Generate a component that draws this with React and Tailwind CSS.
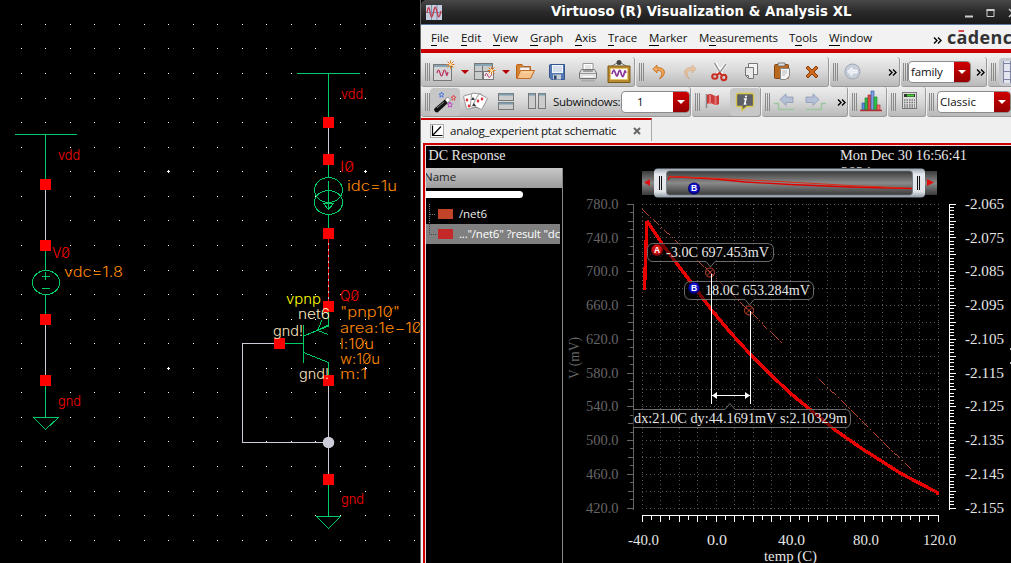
import React from "react";

const GREEN = "#00cc66";
const WIRE = "#ccccd8";
const RED = "#ff0000";

/* ---------- schematic canvas ---------- */

function Label({ x, y, w, size = 14, fill, children }) {
  return (
    <text
      x={x}
      y={y}
      fill={fill}
      textLength={w}
      lengthAdjust="spacingAndGlyphs"
      fontSize={size}
      className="font-['Inter','DejaVu_Sans',sans-serif] font-light"
    >
      {children}
    </text>
  );
}

function Pin({ x, y }) {
  return <rect x={x - 5} y={y - 5} width="11" height="11" fill={RED} />;
}

function Schematic() {
  const dots = [];
  for (let r = 0; r < 23; r++) {
    for (let c = 0; c < 17; c++) {
      const x = Math.floor(21.2 + 24.56 * c);
      const y = Math.floor(24.4 + 24.56 * r);
      dots.push(<rect key={r + "-" + c} x={x} y={y} width="1" height="1" fill="#fff" />);
    }
  }
  const crosses = [[168, 171], [365, 171], [168, 368], [365, 368]];
  return (
    <svg width="420" height="563" viewBox="0 0 420 563" className="block shrink-0 bg-black">
      <g shapeRendering="crispEdges">
        {dots}
        {crosses.map(([x, y]) => (
          <path key={x + "," + y} d={`M${x - 1} ${y + 0.5}h3M${x + 0.5} ${y - 1}v3`} stroke="#fff" />
        ))}
        <g fill="none" stroke={GREEN}>
          <path d="M15 134.5H77M45.5 134V180M45.5 250V270M45.5 295V315M45.5 385V417M33 417.5H59" />
          <path d="M45.5 272V280M42 276.5H50M42 288.5H50" />
          <path d="M33.5 417.5L45.5 429.5L58.5 417.5" />
          <ellipse cx="46" cy="282.500" rx="13.500" ry="12" />
          <path d="M297 73.500H360M328.500 73V118M328.500 164V177M328.500 215V229" />
          <ellipse cx="328.500" cy="190" rx="14" ry="12.500" />
          <ellipse cx="328.500" cy="202.500" rx="14" ry="12" />
          <path d="M328.500 181V209M323 203.500H334M323.500 203.500L328.500 209.500L333.500 203.500" />
          <path d="M328.500 310V326L303.500 336M303.500 325V363M303.500 352.500L328.500 362.500V376M284 343.500H303" />
          <path d="M322 320L317.500 330.500L328.500 334.500M317.500 330.500L328.500 325" />
          <path d="M328.500 484V516M316 516.500H341M316.500 516.500L328.500 528.500L340.500 516.500" />
        </g>
        <g fill="none" stroke={WIRE}>
          <path d="M45.5 190V240M45.5 325V375M328.500 128V154M275 343.500H242.500V442.500H328M328.500 386V475M328.500 239V302" />
          <path d="M328.500 239V302" stroke={RED} strokeDasharray="4 2" />
        </g>
        {[[45, 184], [45, 245], [45, 319], [45, 380], [328, 122], [328, 159], [328, 233], [328, 306], [279, 343], [328, 380], [328, 479]].map(
          ([x, y]) => (
            <Pin key={x + "," + y} x={x} y={y} />
          )
        )}
      </g>
      <circle cx="328.500" cy="442.500" r="5.800" fill={WIRE} />
      <Label x={58} y={160} w={22} fill={RED}>vdd</Label>
      <Label x={52} y={258} w={18} fill={RED}>V0</Label>
      <Label x={64} y={276.500} w={59} fill="#ff8800">vdc=1.8</Label>
      <Label x={58} y={406} w={23} fill={RED}>gnd</Label>
      <Label x={341} y={99} w={22} fill={RED}>vdd</Label>
      <Label x={340} y={172} w={14} fill={RED}>I0</Label>
      <Label x={347} y={191} w={50} fill="#ff8800">idc=1u</Label>
      <Label x={286} y={304} w={35} fill="#ffff00">vpnp</Label>
      <Label x={340} y={301} w={19} fill={RED}>Q0</Label>
      <Label x={298} y={319} w={32} fill="#ffe6bf">net6</Label>
      <Label x={273} y={336} w={30} fill="#ffe6bf">gnd!</Label>
      <Label x={299} y={379} w={30} fill="#ffe6bf">gnd!</Label>
      <Label x={340} y={317} w={60} fill="#ff8800">"pnp10"</Label>
      <Label x={340} y={333} w={82} fill="#ff8800">area:1e−10</Label>
      <Label x={340} y={349} w={34} fill="#ff8800">l:10u</Label>
      <Label x={340} y={364} w={40} fill="#ff8800">w:10u</Label>
      <Label x={340} y={379} w={27} fill="#ff8800">m:1</Label>
      <Label x={341} y={504} w={23} fill={RED}>gnd</Label>
      {/* slashes of the zeros */}
      <path d="M61.500 257.500L69 248.500M346 171.500L353.500 162.500M351 300.500L358.500 291.500" stroke={RED} strokeWidth=".9" />
      <path d="M386 316L393 307.500M413 332.500L420 323.500M358 348.500L365.500 339.500M363.500 363.500L371 354.500" stroke="#ff8800" strokeWidth=".9" />
    </svg>
  );
}

/* ---------- toolbar parts ---------- */

function Group({ className, children }) {
  return (
    <div
      className={
        "flex h-full shrink-0 items-center overflow-hidden rounded-[3px] border-b border-r border-[#9a9a9a] bg-linear-to-b from-[#ededed] via-[#d8d8d8] to-[#b9b9b9] " +
        className
      }
    >
      {children}
    </div>
  );
}

function Grip({ className = "ml-[3px]" }) {
  return (
    <svg width="5" height="18" viewBox="0 0 5 18" className={"shrink-0 " + className} shapeRendering="crispEdges">
      <path d="M.5 0V18M2.500 0V18M4.500 0V18" stroke="#8b8b8b" />
    </svg>
  );
}

function Icon({ w, h, className = "", children }) {
  return (
    <svg width={w} height={h} viewBox={`0 0 ${w} ${h}`} fill="none" className={"shrink-0 " + className}>
      {children}
    </svg>
  );
}

function Star() {
  return (
    <g>
      <path d="M17.500 0.500V8.500M13.500 4.500H21.500M14.500 1.500L20.500 7.500M20.500 1.500L14.500 7.500" stroke="#e07b1c" />
      <circle cx="17.500" cy="4.500" r="1.500" fill="#ffd9a0" />
    </g>
  );
}

function DropArrow({ className }) {
  return (
    <Icon w={8} h={4} className={className}>
      <path d="M0 0H8L4 4Z" fill="#b80000" />
    </Icon>
  );
}

function More({ className }) {
  return (
    <Icon w={9} h={7} className={className}>
      <path d="M1 .5L4 3.500L1 6.500M5 .5L8 3.500L5 6.500" stroke="#000" strokeWidth="1.400" />
    </Icon>
  );
}

function Combo({ className, text, textClass }) {
  return (
    <div className={"flex h-[22px] shrink-0 overflow-hidden rounded-[4px] border border-[#8c8c8c] bg-white " + className}>
      <span className={"flex-1 leading-[19px] " + textClass}>{text}</span>
      <span className="flex w-[16px] items-center justify-center bg-linear-to-b from-[#d00000] to-[#960000]">
        <Icon w={8} h={4}>
          <path d="M0 0H8L4 4Z" fill="#fff" />
        </Icon>
      </span>
    </div>
  );
}

function ToolbarOne() {
  return (
    <div className="flex h-[30px] gap-px overflow-hidden">
      <Group className="w-[214px]">
        <Grip className="ml-[4px]" />
        <Icon w={23} h={22} className="ml-[3px] -mt-px">
          <rect x="0.500" y="4.500" width="18" height="16" fill="#d5d5d5" stroke="#777" />
          <path d="M1 6H18" stroke="#86a4b5" strokeWidth="2" />
          <path d="M4 13C5 9 6 9 7 13S9 17 10 13S12 9 13 13S14 16 15 12" stroke="#b8325e" strokeWidth="1.200" />
          <Star />
        </Icon>
        <DropArrow className="ml-[5px]" />
        <Icon w={23} h={20} className="ml-[5px]">
          <rect x="0.500" y="1.500" width="18" height="16" fill="#c9cccd" stroke="#777" />
          <path d="M1 3H18" stroke="#86a4b5" strokeWidth="2" />
          <path d="M8.500 4V17M1 9.500H18" stroke="#777" />
          <rect x="9.500" y="9.500" width="10" height="8" fill="#eee" stroke="#777" />
          <path d="M11 14C12 10 13 11 14 14S16 15 18 12" stroke="#b8325e" />
          <g transform="translate(0,4)">
            <Star />
          </g>
        </Icon>
        <DropArrow className="ml-[5px]" />
        <Icon w={21} h={18} className="ml-[5px] mr-px">
          <path d="M1.500 15.500V2.500Q1.500 1.500 2.500 1.500H7L8.500 3.500H15.500V7" fill="#d9822e" stroke="#b9611b" />
          <path d="M5 4.500H14.500V8H5Z" fill="#f4f4f4" stroke="#aaa" strokeWidth=".6" />
          <path d="M2 15.500L5.500 7.500H19.500L15.500 15.500Z" fill="#f6c48c" stroke="#c4691f" />
          <path d="M6.500 9H17.500" stroke="#fde0bb" />
        </Icon>
        <Icon w={17} h={17} className="ml-[12px] mt-px">
          <path d="M1.500 .500H15.500V15.500H2.500L.500 13.500V1Z" fill="#5579b5" stroke="#33558f" />
          <rect x="3" y="1" width="11" height="8" fill="#f2f5fa" />
          <path d="M4 3H13M4 5H13M4 7H13" stroke="#b9c6dc" />
          <rect x="4" y="10.500" width="8" height="5" fill="#c8cdd4" />
          <rect x="5" y="11.500" width="2.500" height="4" fill="#2d4470" />
        </Icon>
        <Icon w={20} h={20} className="ml-[12px]">
          <path d="M5 8.500V1.500H15V8.500" fill="#fff" stroke="#999" />
          <path d="M7 4H13M7 6H13" stroke="#ccc" />
          <path d="M3.500 7.500H16.500L18.500 11V16.500H1.500V11Z" fill="#e2e2e2" stroke="#777" />
          <path d="M2 11.500H18" stroke="#999" />
          <path d="M5 14.500H15" stroke="#fff" />
          <path d="M3 18.500H17" stroke="#aaa" strokeWidth="2" />
          <path d="M5 9H15" stroke="#888" strokeWidth="1.500" />
        </Icon>
        <Icon w={24} h={23} className="ml-[9px]">
          <path d="M3 7L12 2L21 7" stroke="#777" />
          <circle cx="12" cy="2.500" r="2.500" fill="#444" />
          <path d="M1 6H23V22.500H1Z" fill="#b88b30" stroke="#7b5a17" />
          <path d="M3.500 8.500H20.500V19.500H3.500Z" fill="#fff" stroke="#e5c46a" />
          <path d="M5 14C6 10 7 9 8 12S10 18 11 14S13 9 14 13S16 18 17 14S18 10 19 13" stroke="#8d3a9c" strokeWidth="1.700" />
        </Icon>
      </Group>
      <Group className="w-[193px]">
        <Grip />
        <Icon w={14} h={16} className="ml-[8px]">
          <path d="M5 1L.8 5L5 9V6.500Q9.800 6.300 9.800 9.500Q9.800 12 7.500 15Q12.800 12 12.500 8Q12 3.500 5 3.600Z" fill="#f0a65c" stroke="#c6711f" strokeWidth=".9" />
        </Icon>
        <Icon w={14} h={16} className="ml-[17px] opacity-60">
          <path d="M9 1L13.200 5L9 9V6.500Q4.200 6.300 4.200 9.500Q4.200 12 6.500 15Q1.200 12 1.500 8Q2 3.500 9 3.600Z" fill="#eab27d" stroke="#d89a62" strokeWidth=".9" />
        </Icon>
        <Icon w={18} h={20} className="ml-[14px]">
          <path d="M4 1L11 13M15 2L6 13" stroke="#fff" strokeWidth="3.500" />
          <path d="M3.500 1L10.500 13M15 2L7 13" stroke="#999" strokeWidth="1.500" />
          <ellipse cx="3.800" cy="14.500" rx="2.600" ry="2.200" stroke="#c92c20" strokeWidth="2" />
          <ellipse cx="12.800" cy="15.500" rx="2.600" ry="2.700" stroke="#c92c20" strokeWidth="2" />
          <path d="M6 13L8.500 11L11 13" stroke="#c92c20" strokeWidth="2" />
        </Icon>
        <Icon w={14} h={17} className="ml-[16px]">
          <path d="M3.500 .500H12.500V11.500H3.500Z" fill="#f5f5f5" stroke="#777" />
          <path d="M.500 4.500H8.500V15.500H3.500L.500 12.500Z" fill="#e8e8e8" stroke="#777" />
          <path d="M.500 12.500H3.500V15.500" stroke="#777" />
        </Icon>
        <Icon w={16} h={19} className="ml-[15px]">
          <rect x=".5" y="2.500" width="14" height="14" rx="1" fill="#b8691d" stroke="#85450e" />
          <path d="M4 1H11V4H4Z" fill="#ddd" stroke="#666" strokeWidth=".8" />
          <path d="M6.500 6.500H15.500V14L12 17.500H6.500Z" fill="#f4f4f4" stroke="#888" />
          <path d="M8 9H13M8 11H13M8 13H11" stroke="#bbb" />
        </Icon>
        <Icon w={14} h={14} className="ml-[15px]">
          <path d="M1 3L3 1L7 5L11 1L13 3L9 7L13 11L11 13L7 9L3 13L1 11L5 7Z" fill="#cf6a1d" stroke="#7c3507" strokeWidth=".9" />
        </Icon>
      </Group>
      <Group className="w-[70px]">
        <Grip />
        <Icon w={17} h={17} className="ml-[6px]">
          <circle cx="8.500" cy="8.500" r="7.500" fill="#c9cfd9" stroke="#9aa5b5" />
          <path d="M3.500 8.500L8 4.500V7H13V10H8V12.500Z" fill="#e7ebf1" stroke="#fff" strokeWidth=".7" />
        </Icon>
        <More className="ml-[27px] mt-px" />
      </Group>
      <Group className="w-[86px]">
        <Grip className="ml-[2px]" />
        <Combo className="w-[63px]" text="family" textClass="pl-[2px] tracking-[-0.15px]" />
        <More className="ml-[5px] mt-px" />
      </Group>
      <Group className="w-[40px]">
        <Grip className="ml-[3px]" />
        <div className="ml-[3px] flex h-[28px] w-[30px] shrink-0 items-center rounded-[4px] bg-[#c7c9d0] pl-[4px]">
          <Icon w={26} h={22}>
            <rect width="26" height="22" fill="#e2e4ee" />
            <path d="M.5 0V22M7.500 0V22M14.500 0V22M0 2.500H26M0 10.500H26M0 18.500H26" stroke="#7f84a5" />
          </Icon>
        </div>
      </Group>
    </div>
  );
}

function ToolbarTwo() {
  return (
    <div className="flex h-[30px] gap-px overflow-hidden">
      <Group className="w-[270px]">
        <Grip className="ml-[4px]" />
        <div className="flex h-[28px] w-[30px] shrink-0 items-center justify-center rounded-[4px] bg-[#c6c6c6]">
          <Icon w={26} h={24}>
            <path d="M2 19L14 8.500L17 12L5.500 22.500Q2.500 22.500 2 19Z" fill="#111" />
            <path d="M13 9.500L16 7L18.500 10L15.500 13Z" fill="#fff" stroke="#777" strokeWidth=".7" />
            <path d="M5 18L12 12" stroke="#888" />
            <path d="M9.500 2L10.100 3.900L12 4.100L10.600 5.300L11 7.200L9.500 6.200L7.900 7.200L8.300 5.300L7 4.100L8.900 3.900Z" stroke="#3b6fe0" strokeWidth=".9" />
            <path d="M21.500 5L22.100 6.900L24 7.100L22.600 8.300L23 10.200L21.500 9.200L19.900 10.200L20.300 8.300L19 7.100L20.900 6.900Z" stroke="#e04040" strokeWidth=".9" />
            <path d="M18 12L18.600 13.900L20.500 14.100L19.100 15.300L19.500 17.200L18 16.200L16.400 17.200L16.800 15.300L15.500 14.100L17.400 13.900Z" stroke="#c23fc9" strokeWidth=".9" />
          </Icon>
        </div>
        <Icon w={25} h={20} className="ml-[3px]">
          <g stroke="#888" strokeWidth=".8" fill="#fff">
            <rect x="2" y="2.500" width="10" height="14" rx="1.500" transform="rotate(-14 7 10)" />
            <rect x="8" y="1.500" width="10" height="14" rx="1.500" transform="rotate(6 13 8)" />
            <rect x="12.500" y="3" width="10" height="13" rx="1.500" transform="rotate(28 17 9)" />
          </g>
          <path d="M4 6L5.500 8L4 10L2.500 8ZM15 7L16.500 9L15 11L13.500 9ZM19 5L20.500 7L19 9L17.500 7ZM6 12L7.500 14L6 16L4.500 14Z" fill="#d83030" />
          <path d="M10 5L12 8H8ZM11 11L13 14H9Z" fill="#333" />
        </Icon>
        <Icon w={17} h={19} className="ml-[10px]">
          <rect x=".5" y="1.500" width="15" height="7" fill="#ccc" stroke="#777" />
          <rect x=".5" y="10.500" width="15" height="7" fill="#ccc" stroke="#777" />
          <path d="M1 2.500H15M1 11.500H15" stroke="#7f9db0" strokeWidth="2" />
        </Icon>
        <Icon w={19} h={19} className="ml-[13px]">
          <rect x=".5" y="1.500" width="7" height="15" fill="#ccc" stroke="#777" />
          <rect x="10.500" y="1.500" width="7" height="15" fill="#ccc" stroke="#777" />
          <path d="M1 2.500H7M11 2.500H17" stroke="#7f9db0" strokeWidth="2" />
        </Icon>
        <span className="ml-[6px] w-[68px] shrink-0 whitespace-nowrap tracking-[-0.3px]">Subwindows:</span>
        <Combo className="w-[69px]" text="1" textClass="pl-[15px]" />
      </Group>
      <Group className="w-[69px]">
        <Grip />
        <Icon w={17} h={17} className="ml-[5px]">
          <path d="M1.500 1V15" stroke="#888" strokeWidth="1.500" />
          <path d="M2 2Q5 0 8 2T14 2V11Q11 13 8 11T2 11Z" fill="#c93a38" />
          <path d="M5 2V11M10.500 3V12" stroke="#e57573" strokeWidth="2" />
        </Icon>
        <div className="ml-[8px] flex h-[28px] w-[30px] shrink-0 items-center justify-center rounded-[4px] bg-[#c8c8c8]">
          <Icon w={20} h={20}>
            <path d="M3 1.500H17Q18.500 1.500 18.500 3V13Q18.500 14.500 17 14.500H12L7 18.500V14.500H3Q1.500 14.500 1.500 13V3Q1.500 1.500 3 1.500Z" fill="#5c6066" stroke="#d9c544" strokeWidth="1.300" />
            <path d="M8.800 7H11L9.500 12H11.300" stroke="#fff" strokeWidth="1.500" />
            <circle cx="11" cy="4.500" r="1.100" fill="#fff" />
          </Icon>
        </div>
      </Group>
      <Group className="w-[86px]">
        <Grip />
        <Icon w={21} h={18} className="ml-[4px]">
          <path d="M0 10.500H4.500V16.500H20" stroke="#9cc5a0" strokeWidth="1.500" />
          <path d="M6 6.500L12 .800V4H19V9.500H12V12.500Z" fill="#b4c0d6" stroke="#91a0ba" strokeWidth=".9" />
        </Icon>
        <Icon w={21} h={18} className="ml-[10px]">
          <path d="M21 10.500H16.500V16.500H1" stroke="#9cc5a0" strokeWidth="1.500" />
          <path d="M14 6.500L8 .800V4H1V9.500H8V12.500Z" fill="#b4c0d6" stroke="#91a0ba" strokeWidth=".9" />
        </Icon>
        <More className="ml-[11px] mt-px" />
      </Group>
      <Group className="w-[38px]">
        <Grip />
        <Icon w={23} h={22} className="ml-[3px] -mt-px">
          <g strokeWidth=".6">
            <rect x="2" y="13" width="3" height="7" fill="#5b8bd8" stroke="#2b4f95" />
            <rect x="5" y="8" width="3" height="12" fill="#35b745" stroke="#178024" />
            <rect x="8" y="5" width="3" height="15" fill="#e05050" stroke="#a52020" />
            <rect x="11" y="1" width="3" height="19" fill="#7da2e0" stroke="#2b4f95" />
            <rect x="14" y="7" width="3" height="13" fill="#2fc24a" stroke="#178024" />
            <rect x="17" y="15" width="3" height="5" fill="#f07070" stroke="#b52020" />
          </g>
          <path d="M0 20.500H22" stroke="#b03030" strokeWidth="1.600" />
        </Icon>
      </Group>
      <Group className="w-[38px]">
        <Grip />
        <Icon w={16} h={18} className="ml-[6px] -mt-px">
          <rect x=".5" y=".5" width="14" height="16" fill="#ddd" stroke="#777" />
          <rect x="2" y="2" width="11" height="3" fill="#333" />
          <rect x="5" y="2.500" width="7" height="2" fill="#46d537" />
          <path d="M2 8H13M2 10.500H13M2 13H13M2 15H13" stroke="#777" strokeWidth="1.500" strokeDasharray="1.500 1" />
        </Icon>
      </Group>
      <Group className="w-[90px]">
        <Grip className="ml-[2px]" />
        <Combo className="ml-[3px] w-[74px]" text="Classic" textClass="pl-[2px]" />
      </Group>
    </div>
  );
}

/* ---------- plot ---------- */

function SerifText({ x, y, w, fill = "#e6e6e6", size = 14.5, anchor, children, ...rest }) {
  return (
    <text
      x={x}
      y={y}
      fill={fill}
      fontSize={size}
      textLength={w}
      lengthAdjust="spacingAndGlyphs"
      textAnchor={anchor}
      className="font-['Liberation_Serif',serif]"
      {...rest}
    >
      {children}
    </text>
  );
}

function Badge({ x, y, letter, fill, dark }) {
  return (
    <g>
      <circle cx={x} cy={y} r="6" fill={dark} />
      <circle cx={x} cy={y - 0.5} r="4.800" fill={fill} />
      <text x={x} y={y + 2.500} textAnchor="middle" fontSize="8.500" fontWeight="700" fill="#fff" className="font-['Liberation_Sans',sans-serif]">
        {letter}
      </text>
    </g>
  );
}

const MAIN =
  "M644.500 290L645.500 258L647 221L663 245L690 281L711.500 310L730 332L750 354L770 374L790 393L812 411L835 430L864 450L883 462L900 473L917 482L937.500 492.500V495";

function Plot() {
  const gx = Array.from({ length: 17 }, (_, i) => Math.floor(642 + i * 18.5) + 0.5);
  const gy = Array.from({ length: 19 }, (_, i) => Math.floor(204.2 + i * 16.88) + 0.5);
  const left = Array.from({ length: 37 }, (_, i) => i);
  const right = Array.from({ length: 91 }, (_, i) => i);
  const bottom = Array.from({ length: 33 }, (_, i) => i);
  const volts = ["780.0", "740.0", "700.0", "660.0", "620.0", "580.0", "540.0", "500.0", "460.0", "420.0"];
  const slopes = ["-2.065", "-2.075", "-2.085", "-2.095", "-2.105", "-2.115", "-2.125", "-2.135", "-2.145", "-2.155"];
  return (
    <svg width="448" height="417" viewBox="563 146 448 417" className="block shrink-0">
      <defs>
        <linearGradient id="tube" x1="0" y1="0" x2="0" y2="1">
          <stop offset="0" stopColor="#3a3a3a" />
          <stop offset=".5" stopColor="#8a8a8a" />
          <stop offset="1" stopColor="#3a3a3a" />
        </linearGradient>
        <linearGradient id="frame" x1="0" y1="0" x2="0" y2="1">
          <stop offset="0" stopColor="#9aa3ad" />
          <stop offset=".2" stopColor="#e6e9ed" />
          <stop offset=".8" stopColor="#dfe3e8" />
          <stop offset="1" stopColor="#8d97a3" />
        </linearGradient>
        <clipPath id="dateClip">
          <rect x="800" y="146" width="211" height="22" />
        </clipPath>
      </defs>

      <g clipPath="url(#dateClip)">
        <SerifText x={840} y={160} w={127}>Mon Dec 30 16:56:41</SerifText>
        <SerifText x={841} y={176.500} w={30}>2024</SerifText>
      </g>

      <rect x="642" y="171" width="295" height="24" fill="url(#tube)" />
      <rect x="654" y="168.500" width="271" height="29" rx="4" fill="url(#frame)" />
      <rect x="666.500" y="171" width="246" height="24" rx="3" fill="url(#tube)" stroke="#70777f" strokeWidth=".8" />
      <path d="M659.500 176V190M661.500 176V190M917.500 176V190M919.500 176V190" stroke="#111" shapeRendering="crispEdges" />
      <path d="M644 182.500L650 179V186ZM934 182.500L927 179V186Z" fill="#e01010" />
      <path d="M668 180L670 176.500L715 179L745 182L790 184.500L850 187L912 188.500" fill="none" stroke="#e00000" strokeWidth="1.300" />
      <path d="M669 176.500L720 178.500L780 181.500L850 185.500L905 188" fill="none" stroke="#d8301a" />
      <Badge x={694} y={188.500} letter="B" fill="#1414c8" dark="#000078" />

      <g stroke="#565656" strokeDasharray="1 3" shapeRendering="crispEdges">
        {gx.map((x) => (
          <path key={x} d={`M${x} 204V509`} />
        ))}
        {gy.map((y) => (
          <path key={y} d={`M642 ${y}H939`} />
        ))}
      </g>

      <g stroke="#666" shapeRendering="crispEdges">
        <path d="M633.500 204V510" />
        {left.map((i) => {
          const y = Math.floor(204.2 + i * 8.44) + 0.5;
          return <path key={i} d={`M${i % 4 === 0 ? 627 : i % 2 === 0 ? 628 : 630} ${y}H633`} />;
        })}
      </g>
      {volts.map((v, i) => (
        <SerifText key={v} x={586} y={208.800 + i * 33.76} w={32.5} fill="#666">{v}</SerifText>
      ))}
      <SerifText x={0} y={0} w={42} fill="#666" transform="translate(578.500 379) rotate(-90)">V (mV)</SerifText>

      <g stroke="#fff" shapeRendering="crispEdges">
        <path d="M949.500 204V510" />
        {right.map((i) => {
          const y = Math.floor(204.2 + i * 3.376) + 0.5;
          return <path key={i} d={`M950 ${y}H${i % 5 === 0 ? 956 : 954}`} />;
        })}
        <path d="M642 515.500H939" />
        {bottom.map((i) => {
          const x = Math.floor(642 + i * 9.25) + 0.5;
          return <path key={i} d={`M${x} 516V${i % 2 === 0 ? 522 : 519.5}`} />;
        })}
      </g>
      {slopes.map((v, i) => (
        <SerifText key={v} x={965} y={208.800 + i * 33.76} w={39}>{v}</SerifText>
      ))}
      <g fill="#bbb">
        <rect x="1010" y="348" width="1" height="2" />
        <rect x="1010" y="362" width="1" height="2" />
      </g>

      <SerifText x={628} y={545} w={31}>-40.0</SerifText>
      <SerifText x={707} y={545} w={20}>0.0</SerifText>
      <SerifText x={778} y={545} w={27}>40.0</SerifText>
      <SerifText x={853} y={545} w={26}>80.0</SerifText>
      <SerifText x={923} y={545} w={33}>120.0</SerifText>
      <SerifText x={764} y={561} w={53}>temp (C)</SerifText>

      <path
        d="M642 209L677 242L710 272L749 310.500L782 343.500M819 379L847 406L879 438L914 472"
        fill="none"
        stroke="#cc4a2a"
        strokeWidth=".9"
        strokeDasharray="9 2 2 2"
        shapeRendering="crispEdges"
      />
      <path d={MAIN} fill="none" stroke="#e80000" strokeWidth="3.400" strokeLinejoin="bevel" shapeRendering="crispEdges" />

      <g fill="#000" fillOpacity=".5" stroke="#6a6a6a">
        <path d="M653 243.500H767Q773.500 243.500 773.500 250V255Q773.500 261.500 767 261.500H715L710.500 267L706 261.500H653Q647.500 261.500 647.500 255V250Q647.500 243.500 653 243.500Z" />
        <path d="M691 281.500H807Q813.500 281.500 813.500 288V293Q813.500 299.500 807 299.500H754L749.500 305L745 299.500H691Q684.500 299.500 684.500 293V288Q684.500 281.500 691 281.500Z" />
        <path d="M633 409.500H725L730 403.500L735 409.500H845Q850.500 409.500 850.500 416V421Q850.500 427.500 845 427.500H633" />
      </g>
      <SerifText x={666} y={257} w={103}>-3.0C 697.453mV</SerifText>
      <SerifText x={705} y={295} w={105}>18.0C 653.284mV</SerifText>
      <SerifText x={634} y={423} w={213}>dx:21.0C dy:44.1691mV s:2.10329m</SerifText>
      <Badge x={657} y={250} letter="A" fill="#d01414" dark="#7c0000" />
      <Badge x={694} y={288} letter="B" fill="#1414c8" dark="#000078" />

      <g fill="none" stroke="#c8402a">
        <circle cx="710" cy="272.500" r="4.500" />
        <path d="M707 269.500L713 275.500M713 269.500L707 275.500" />
        <circle cx="749" cy="310.500" r="4.500" />
        <path d="M746 307.500L752 313.500M752 307.500L746 313.500" />
      </g>
      <g stroke="#fff" shapeRendering="crispEdges">
        <path d="M711.500 274V404M750.500 311V404M712 395.500H750" />
      </g>
      <path d="M712 395.500L717 392V399ZM750 395.500L745 392V399Z" fill="#fff" />
    </svg>
  );
}

/* ---------- viewer window ---------- */

function TitleBar() {
  return (
    <div className="flex h-[25px] shrink-0 items-center rounded-tl-[5px] border-b border-[#5b7da5] bg-linear-to-b from-[#484848] via-[#2a2a2a] to-[#1a1a1a]">
      <Icon w={16} h={15} className="ml-[5px]">
        <rect width="16" height="15" fill="#c5cddd" />
        <path d="M5.500 0V15M11 0V15M0 7.500H16" stroke="#7d8db0" />
        <path d="M1 8C2 1 3 1 4 7S6 14 7.500 7S9.500 1 11 7S13 14 15 6" stroke="#c33a4a" strokeWidth="1.300" />
      </Icon>
      <span className="ml-[109px] w-[302px] whitespace-nowrap font-['DejaVu_Sans',sans-serif] text-[13.300px] font-bold tracking-[0.07px] text-white">
        Virtuoso (R) Visualization &amp; Analysis XL
      </span>
      <Icon w={9} h={10} className="ml-[112px] mt-px">
        <path d="M1 8.500H9" stroke="#ccc" strokeWidth="2" />
      </Icon>
      <Icon w={9} h={10} className="ml-[13px] mt-px">
        <path d="M1 2H8V8.500H1Z" stroke="#ccc" />
        <path d="M.5 2H8.500" stroke="#ccc" strokeWidth="2" />
      </Icon>
      <Icon w={4} h={10} className="ml-[13px] mt-px">
        <path d="M1 1L4 4M1 9L4 6" stroke="#ccc" strokeWidth="1.500" />
      </Icon>
    </div>
  );
}

function Key({ children }) {
  return <span className="border-b border-black">{children}</span>;
}

function MenuBar() {
  return (
    <div className="flex h-[24px] shrink-0 items-center whitespace-nowrap bg-[#f2f2f2] pl-[10px] leading-[13px] tracking-[-0.05px]">
      <span className="w-[30px] shrink-0"><Key>F</Key>ile</span>
      <span className="w-[32px] shrink-0"><Key>E</Key>dit</span>
      <span className="w-[37px] shrink-0"><Key>V</Key>iew</span>
      <span className="w-[45px] shrink-0"><Key>G</Key>raph</span>
      <span className="w-[33px] shrink-0"><Key>A</Key>xis</span>
      <span className="w-[41px] shrink-0"><Key>T</Key>race</span>
      <span className="w-[50px] shrink-0"><Key>M</Key>arker</span>
      <span className="w-[90px] shrink-0 tracking-[-0.15px]">M<Key>e</Key>asurements</span>
      <span className="w-[40px] shrink-0">T<Key>o</Key>ols</span>
      <span className="w-[43px] shrink-0"><Key>W</Key>indow</span>
      <More className="ml-[61px] mt-[7px]" />
      <svg width="64" height="20" viewBox="0 0 64 20" className="ml-[5px] shrink-0">
        <text x="0" y="17" fontSize="18" fontWeight="700" fill="#333" textLength="76" className="font-['Open_Sans',sans-serif]">
          cadence
        </text>
        <path d="M11.500 4H17" stroke="#d01020" strokeWidth="1.500" />
      </svg>
    </div>
  );
}

function TabBar() {
  return (
    <div className="flex h-[26px] shrink-0 items-start bg-[#efefef] pt-px">
      <div className="flex h-[23px] w-[231px] items-center border-r border-t-2 border-r-[#aaa] border-t-[#cc0000] bg-[#f1f1f1]">
        <Icon w={14} h={14} className="ml-[9px]">
          <rect x=".5" y=".5" width="13" height="13" fill="#fff" stroke="#aaa" />
          <path d="M2.500 1.500V11.500H12.500M3 11L11 2.500" stroke="#000" strokeWidth="1.200" />
        </Icon>
        <span className="ml-[6px] w-[167px] whitespace-nowrap tracking-[-0.24px]">analog_experient ptat schematic</span>
        <Icon w={8} h={8} className="ml-[16px]">
          <path d="M1 1L7 7M7 1L1 7" stroke="#666" strokeWidth="2" />
        </Icon>
      </div>
    </div>
  );
}

function TraceList() {
  return (
    <div className="flex h-full w-[137px] shrink-0 flex-col">
      <div className="h-[22px] pl-[2px]">
        <svg width="90" height="20" viewBox="0 0 90 20" className="block">
          <SerifText x={0.5} y={14} w={77}>DC Response</SerifText>
        </svg>
      </div>
      <div className="flex flex-1 flex-col border-r border-[#8a8a8a]">
        <div className="h-[20px] overflow-hidden bg-linear-to-b from-[#c8c8c8] to-[#9c9c9c] leading-[18px] text-[#222]">
          <span className="-ml-[2px]">Name</span>
        </div>
        <div className="mt-[3px] h-[7px] w-[97px] rounded-r-full bg-white" />
        <div className="mt-[6px] flex h-[20px] items-center text-[#eee]">
          <Icon w={8} h={20} className="ml-[3px]">
            <path d="M.5 0V20M1 10.500H7" stroke="#777" strokeDasharray="1 1" />
          </Icon>
          <span className="ml-px h-[10px] w-[15px] bg-[#c24428]" />
          <span className="ml-[6px] tracking-[-0.1px]">/net6</span>
        </div>
        <div className="mr-[2px] flex h-[20px] items-center overflow-hidden whitespace-nowrap bg-[#808080] text-white">
          <Icon w={8} h={20} className="ml-[3px]">
            <path d="M.5 0V10.500H7" stroke="#444" strokeDasharray="1 1" />
          </Icon>
          <span className="ml-px h-[10px] w-[15px] shrink-0 bg-[#c42828]" />
          <span className="ml-[6px] tracking-[-0.2px]">..."/net6" ?result "dc</span>
        </div>
      </div>
    </div>
  );
}

export default function App() {
  return (
    <div className="flex h-[563px] w-[1011px] overflow-hidden bg-black font-['Open_Sans','Noto_Sans',sans-serif] text-[11.500px] text-[#111]">
      <Schematic />
      <div className="flex w-[591px] shrink-0 flex-col overflow-hidden border-l border-[#666] bg-black">
        <TitleBar />
        <MenuBar />
        <div className="flex shrink-0 flex-col border-t-4 border-[#cc0000] bg-[#efefef] pt-[4px]">
          <ToolbarOne />
          <ToolbarTwo />
        </div>
        <TabBar />
        <div className="-ml-px flex h-[420px] shrink-0 bg-[#f4f4f4] pl-[3px]">
          <div className="flex w-[588px] border-l-2 border-t-2 border-[#cc0000]">
            <div className="flex w-[586px] border-l border-t border-[#f5dada] bg-black">
              <TraceList />
              <Plot />
            </div>
          </div>
        </div>
      </div>
    </div>
  );
}
